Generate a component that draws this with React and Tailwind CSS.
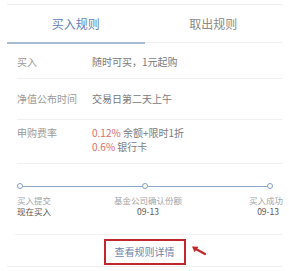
import React from 'react';

const rows = [
  { label: '买入', value: '随时可买，1元起购' },
  { label: '净值公布时间', value: '交易日第二天上午' },
];

const Dot = () => (
  <div className="w-[6px] h-[6px] rounded-full border border-[#7f9cc4] bg-white" />
);

export default function App() {
  return (
    <div
      className="w-[289px] h-[271px] bg-white overflow-hidden px-[7px]"
      style={{ fontFamily: '"Noto Sans CJK SC", "Liberation Sans", sans-serif' }}
    >
      {/* Top rule */}
      <div className="mt-[4px] border-t border-[#eeeeee]" />

      {/* Tabs */}
      <div className="flex h-[39px]">
        <div className="flex-1 flex flex-col">
          <div className="flex-1 flex items-center justify-center text-[12px] text-[#5f82b8]">买入规则</div>
          <div className="h-[2px] bg-[#a9bbd3]" />
        </div>
        <div className="flex-1 flex flex-col">
          <div className="flex-1 flex items-center justify-center text-[12px] text-[#8a8a8a]">取出规则</div>
          <div className="h-[1px] mb-[1px] bg-[#eeeeee]" />
        </div>
      </div>

      {/* Rules */}
      <div className="pl-[10px]">
        <div className="flex h-[35px] pt-[11px] text-[10px] leading-[14px] border-b border-[#f0f0f0]">
          <div className="w-[75px] text-[#9a9a9a]">{rows[0].label}</div>
          <div className="text-[#7a7a7a]">{rows[0].value}</div>
        </div>
        <div className="flex h-[41px] pt-[13px] text-[10px] leading-[14px] border-b border-[#f0f0f0]">
          <div className="w-[75px] text-[#9a9a9a]">{rows[1].label}</div>
          <div className="text-[#7a7a7a]">{rows[1].value}</div>
        </div>
        <div className="flex h-[44px] pt-[6px] text-[10px] leading-[14px] border-b border-[#f0f0f0]">
          <div className="w-[75px] text-[#9a9a9a]">申购费率</div>
          <div className="text-[#7a7a7a]">
            <div><span className="text-[#dc6b6b]">0.12%</span> 余额+限时1折</div>
            <div><span className="text-[#dc6b6b]">0.6%</span> 银行卡</div>
          </div>
        </div>
      </div>

      {/* Timeline */}
      <div className="pl-[10px] pt-[19px] h-[71px] border-b border-[#f0f0f0] ml-[8px]">
        <div className="flex items-center -ml-[8px] mr-[9px]">
          <Dot />
          <div className="flex-1 h-[1px] bg-[#8ea7c9]" />
          <Dot />
          <div className="flex-1 h-[1px] bg-[#8ea7c9]" />
          <Dot />
        </div>
        <div className="flex justify-between text-[8.5px] leading-[11px] mt-[6px] -ml-[8px] mr-[-1px]">
          <div className="text-left">
            <div className="text-[#a5a5a5]">买入提交</div>
            <div className="text-[#555555]">现在买入</div>
          </div>
          <div className="text-center pr-[4px]">
            <div className="text-[#a5a5a5]">基金公司确认份额</div>
            <div className="text-[#555555]">09-13</div>
          </div>
          <div className="text-right">
            <div className="text-[#a5a5a5]">买入成功</div>
            <div className="text-[#555555] pr-[4px]">09-13</div>
          </div>
        </div>
      </div>

      {/* Details link */}
      <div className="flex justify-center items-center h-[32px] border-b border-[#eeeeee] relative">
        <div className="mt-[2px] w-[82px] h-[26px] border-2 border-[#c1272d] flex items-center justify-center text-[10px] text-[#6f84a8]">
          查看规则详情
        </div>
        <svg className="absolute left-[183px] top-[9px]" width="16" height="12" viewBox="0 0 16 12">
          <path d="M15 10 L4 4" stroke="#c1272d" strokeWidth="2.2" fill="none" strokeLinecap="round" />
          <path d="M2 2.5 L8.5 2.8 L4.6 8.2 Z" fill="#c1272d" />
        </svg>
      </div>
    </div>
  );
}
